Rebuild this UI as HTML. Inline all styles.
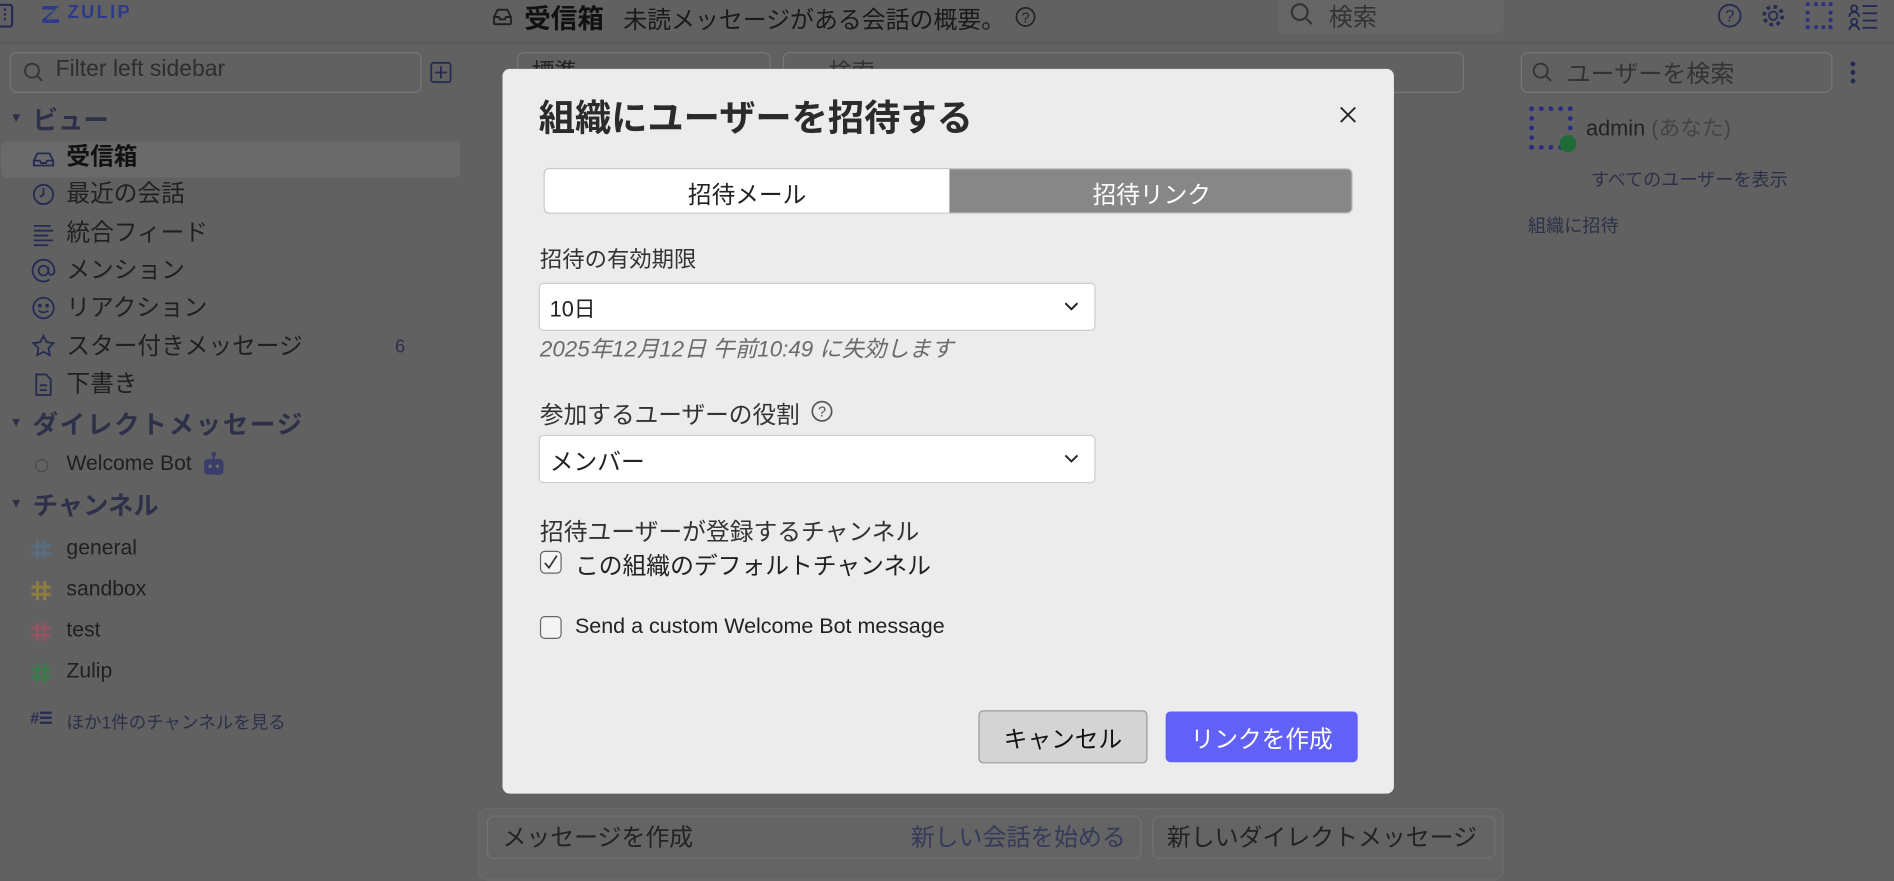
<!DOCTYPE html>
<html><head><meta charset="utf-8"><style>
*{box-sizing:border-box;margin:0;padding:0}
html,body{width:1894px;height:867px;overflow:hidden;background:#616161}
#w{position:absolute;left:0;top:0;width:1568px;height:718px;transform:scale(1.20791);transform-origin:0 0;font-family:"Liberation Sans","Noto Sans CJK JP",sans-serif;color:#1d1d1f}
.a{position:absolute;white-space:nowrap}
.box{position:absolute;border:1px solid #777;border-radius:6px}
.it{position:absolute;left:55px;font-size:19.6px;line-height:22px;color:#202020}
.hd{position:absolute;left:27px;font-size:21px;font-weight:bold;color:#2d3048}
.tri{position:absolute;left:8px;font-size:11px;color:#2d3048}
.ch{position:absolute;left:55px;font-size:17.5px;color:#202020}
.hash{position:absolute;left:25px}
</style></head><body><div id="w">
<!-- header -->
<svg class="a" style="left:0;top:3px" width="12" height="20" viewBox="0 0 12 20"><rect x="-4" y="1" width="14" height="18" rx="2" fill="none" stroke="#262a52" stroke-width="1.8"/><line x1="4" y1="4" x2="4" y2="16" stroke="#262a52" stroke-width="1.6" stroke-dasharray="2 2"/></svg>
<svg class="a" style="left:33px;top:3px" width="18" height="18" viewBox="0 0 18 18"><path d="M2 2h14l-11 11h11v3H2v-3l10-8H2z" fill="#2d3a8c"/></svg>
<div class="a" style="left:56px;top:2px;font-size:15px;font-weight:bold;letter-spacing:2px;color:#2d3a8c">ZULIP</div>
<div style="position:absolute;left:0;top:35px;width:1568px;height:1px;background:#545454"></div>
<svg class="a" style="left:407px;top:6px" width="18" height="16" viewBox="0 0 18 16"><path d="M2 8l3-6h8l3 6v5a1 1 0 0 1-1 1H3a1 1 0 0 1-1-1z M2 8h4l1 2h4l1-2h4" fill="none" stroke="#1e1e1e" stroke-width="1.5"/></svg>
<div class="a" style="left:434px;top:-2px;font-size:22px;font-weight:bold;color:#111">受信箱</div>
<div class="a" style="left:516px;top:0px;font-size:19.8px;color:#1a1a1a">未読メッセージがある会話の概要。</div>
<svg class="a" style="left:840px;top:5px" width="18" height="18" viewBox="0 0 18 18"><circle cx="9" cy="9" r="7.5" fill="none" stroke="#222" stroke-width="1.4"/><text x="9" y="13.5" font-size="12" text-anchor="middle" fill="#222" font-family="Liberation Sans">?</text></svg>
<div style="position:absolute;left:1058px;top:-6px;width:187px;height:34px;background:#666;border-radius:6px"></div>
<svg class="a" style="left:1068px;top:2px" width="20" height="20" viewBox="0 0 20 20"><circle cx="8" cy="8" r="6.5" fill="none" stroke="#333" stroke-width="1.8"/><line x1="13" y1="13" x2="18" y2="18" stroke="#333" stroke-width="1.8"/></svg>
<div class="a" style="left:1100px;top:-2px;font-size:20px;color:#333">検索</div>
<svg class="a" style="left:1421px;top:2px" width="22" height="22" viewBox="0 0 22 22"><circle cx="11" cy="11" r="9" fill="none" stroke="#262a52" stroke-width="1.5"/><text x="11" y="16" font-size="14" text-anchor="middle" fill="#262a52" font-family="Liberation Sans">?</text></svg>
<svg class="a" style="left:1457px;top:2px" width="22" height="22" viewBox="0 0 22 22"><circle cx="11" cy="11" r="3.5" fill="none" stroke="#262a52" stroke-width="1.5"/><circle cx="11" cy="11" r="7.5" fill="none" stroke="#262a52" stroke-width="3" stroke-dasharray="3 2.9"/></svg>
<div style="position:absolute;left:1495px;top:2px;width:22px;height:22px;border:3px dotted #2a2d80"></div>
<svg class="a" style="left:1530px;top:2px" width="25" height="24" viewBox="0 0 25 24"><g fill="none" stroke="#262a52" stroke-width="1.6"><circle cx="5" cy="5" r="2.5"/><path d="M1 12a4 4 0 0 1 8 0"/><circle cx="5" cy="16" r="2.5"/><path d="M1 23a4 4 0 0 1 8 0"/><path d="M12 3h12M12 9h12M12 15h12M12 21h12"/></g></svg>
<!-- left sidebar -->
<div class="box" style="left:8px;top:43px;width:341px;height:34px"></div>
<svg class="a" style="left:19px;top:51px" width="18" height="18" viewBox="0 0 18 18"><circle cx="7.5" cy="7.5" r="5.8" fill="none" stroke="#333" stroke-width="1.5"/><line x1="11.5" y1="11.5" x2="16" y2="16" stroke="#333" stroke-width="1.5"/></svg>
<div class="a" style="left:46px;top:47px;font-size:19px;color:#2e2e2e">Filter left sidebar</div>
<svg class="a" style="left:356px;top:51px" width="18" height="18" viewBox="0 0 18 18"><rect x="1" y="1" width="16" height="16" rx="2" fill="none" stroke="#262a52" stroke-width="1.5"/><path d="M9 4v10M4 9h10" stroke="#262a52" stroke-width="1.5"/></svg>
<div class="tri" style="top:92px">▼</div><div class="hd" style="top:84px">ビュー</div>
<div style="position:absolute;left:1px;top:117px;width:380px;height:30px;background:#6a6a6a;border-radius:5px"></div>
<div class="it" style="top:119px;font-weight:bold;color:#111">受信箱</div>
<div class="it" style="top:150px">最近の会話</div>
<div class="it" style="top:182px">統合フィード</div>
<div class="it" style="top:213px">メンション</div>
<div class="it" style="top:244px">リアクション</div>
<div class="it" style="top:276px">スター付きメッセージ</div>
<div class="a" style="left:327px;top:279px;font-size:15px;color:#2d3048">6</div>
<div class="it" style="top:307px">下書き</div>
<svg class="a" style="left:26px;top:120px" width="22" height="220" viewBox="0 0 22 220"><g fill="none" stroke="#262a52" stroke-width="1.5">
<path d="M2 13l3-6h10l3 6v4H2z M2 13h5l1 2h4l1-2h5"/>
<circle cx="10" cy="41" r="8"/><path d="M10 36v5l-3 2"/>
<path d="M2 67h14M2 71h16M2 75h12M2 79h16M2 83h12"/>
<circle cx="10" cy="104" r="4"/><path d="M14 101v4a2.5 2.5 0 0 0 5 0v-1a9 9 0 1 0-4 7.5"/>
<circle cx="10" cy="135" r="8.5"/><circle cx="7" cy="133" r=".8" fill="#262a52"/><circle cx="13" cy="133" r=".8" fill="#262a52"/><path d="M6 137a5 4 0 0 0 8 0"/>
<path d="M10 158l2.6 5.3 5.8.8-4.2 4.1 1 5.8-5.2-2.7-5.2 2.7 1-5.8-4.2-4.1 5.8-.8z"/>
<path d="M4 190h8l4 4v13H4z M7 199h6M7 203h6"/></g></svg>
<div class="tri" style="top:344px">▼</div><div class="hd" style="top:336px;letter-spacing:1.5px">ダイレクトメッセージ</div>
<div class="a" style="left:29px;top:380px;width:11px;height:11px;border:1.5px solid #4a4a4a;border-radius:50%"></div>
<div class="ch" style="top:373px">Welcome Bot</div>
<svg class="a" style="left:168px;top:374px" width="18" height="20" viewBox="0 0 18 20"><rect x="1" y="6" width="16" height="13" rx="3" fill="#3b3c6b"/><rect x="8" y="1" width="2" height="5" fill="#3b3c6b"/><circle cx="9" cy="2" r="2" fill="#3b3c6b"/><circle cx="6" cy="12" r="1.5" fill="#6a6a6a"/><circle cx="12" cy="12" r="1.5" fill="#6a6a6a"/></svg>
<div class="tri" style="top:411px">▼</div><div class="hd" style="top:403px">チャンネル</div>
<svg class="hash" style="top:446px" width="18" height="18" viewBox="0 0 18 18"><path d="M6 1v16M12 1v16M1 6h16M1 12h16" stroke="#5a6d80" stroke-width="2.6"/></svg><div class="ch" style="top:443px">general</div>
<svg class="hash" style="top:480px" width="18" height="18" viewBox="0 0 18 18"><path d="M6 1v16M12 1v16M1 6h16M1 12h16" stroke="#8c7d40" stroke-width="2.6"/></svg><div class="ch" style="top:477px">sandbox</div>
<svg class="hash" style="top:514px" width="18" height="18" viewBox="0 0 18 18"><path d="M6 1v16M12 1v16M1 6h16M1 12h16" stroke="#8e5563" stroke-width="2.6"/></svg><div class="ch" style="top:511px">test</div>
<svg class="hash" style="top:548px" width="18" height="18" viewBox="0 0 18 18"><path d="M6 1v16M12 1v16M1 6h16M1 12h16" stroke="#3d7a4c" stroke-width="2.6"/></svg><div class="ch" style="top:545px">Zulip</div>
<div class="a" style="left:25px;top:587px;font-size:13px;font-weight:bold;color:#262a52">#☰</div>
<div class="a" style="left:55px;top:587px;font-size:14.5px;color:#2d3048">ほか1件のチャンネルを見る</div>
<!-- middle behind -->
<div class="box" style="left:428px;top:43px;width:210px;height:34px"></div>
<div class="a" style="left:440px;top:45px;font-size:19px;color:#222">標準</div>
<div class="box" style="left:648px;top:43px;width:564px;height:34px"></div>
<div class="a" style="left:686px;top:45px;font-size:19px;color:#333">検索</div>
<div style="position:absolute;left:396px;top:669px;width:849px;height:60px;border:1px solid #6c6c6c;border-radius:8px;background:#646464"></div>
<div class="box" style="left:403px;top:675px;width:542px;height:36px;border-color:#727272;background:#646464"></div>
<div class="a" style="left:416px;top:677px;font-size:19.8px;color:#222">メッセージを作成</div>
<div class="a" style="left:754px;top:677px;font-size:19.8px;color:#363a5a">新しい会話を始める</div>
<div class="box" style="left:954px;top:675px;width:284px;height:36px;border-color:#727272;background:#646464"></div>
<div class="a" style="left:966px;top:677px;font-size:19.8px;color:#222">新しいダイレクトメッセージ</div>
<!-- right sidebar -->
<div class="box" style="left:1259px;top:43px;width:258px;height:34px"></div>
<svg class="a" style="left:1268px;top:51px" width="18" height="18" viewBox="0 0 18 18"><circle cx="7.5" cy="7.5" r="5.8" fill="none" stroke="#333" stroke-width="1.5"/><line x1="11.5" y1="11.5" x2="16" y2="16" stroke="#333" stroke-width="1.5"/></svg>
<div class="a" style="left:1297px;top:45px;font-size:19.9px;color:#333">ユーザーを検索</div>
<svg class="a" style="left:1530px;top:50px" width="8" height="20" viewBox="0 0 8 20"><circle cx="4" cy="3" r="2" fill="#262a52"/><circle cx="4" cy="10" r="2" fill="#262a52"/><circle cx="4" cy="17" r="2" fill="#262a52"/></svg>
<div style="position:absolute;left:1266px;top:88px;width:36px;height:36px;border:4px dotted #2a2d80"></div>
<div style="position:absolute;left:1291px;top:112px;width:14px;height:14px;border-radius:50%;background:#1f6b35"></div>
<div class="a" style="left:1313px;top:92px;font-size:18px;color:#222">admin <span style="color:#444">(あなた)</span></div>
<div class="a" style="left:1317px;top:138px;font-size:15px;color:#2d3048">すべてのユーザーを表示</div>
<div class="a" style="left:1265px;top:176px;font-size:15px;color:#2d3048">組織に招待</div>
<!-- modal -->
<div style="position:absolute;left:416px;top:57px;width:738px;height:600px;background:#ececec;border-radius:6px"></div>
<div class="a" style="left:446px;top:73px;font-size:30px;font-weight:bold;color:#2b2b2b">組織にユーザーを招待する</div>
<svg class="a" style="left:1108px;top:87px" width="16" height="16" viewBox="0 0 16 16"><path d="M2 2l12 12M14 2L2 14" stroke="#222" stroke-width="1.6"/></svg>
<div style="position:absolute;left:450px;top:139px;width:670px;height:38px;border:1px solid #c8c8c8;border-radius:5px;overflow:hidden;background:#fff">
<div style="position:absolute;left:335px;top:0;width:335px;height:38px;background:#878787"></div>
<div class="a" style="left:0;width:335px;top:5px;text-align:center;font-size:19.6px;color:#222">招待メール</div>
<div class="a" style="left:335px;width:335px;top:5px;text-align:center;font-size:19.6px;color:#fff">招待リンク</div></div>
<div class="a" style="left:447px;top:201px;font-size:18.5px;color:#333">招待の有効期限</div>
<div style="position:absolute;left:446px;top:234px;width:461px;height:40px;background:#fff;border:1px solid #ccc;border-radius:4px"></div>
<div class="a" style="left:455px;top:242px;font-size:18px;color:#222">10日</div>
<svg class="a" style="left:881px;top:249px" width="12" height="10" viewBox="0 0 12 10"><path d="M1 2l5 5 5-5" fill="none" stroke="#222" stroke-width="1.6"/></svg>
<div class="a" style="left:447px;top:275px;font-size:18.5px;font-style:italic;color:#6a6a6a">2025年12月12日 午前10:49 に失効します</div>
<div class="a" style="left:447px;top:327px;font-size:19.6px;color:#333">参加するユーザーの役割</div>
<svg class="a" style="left:671px;top:331px" width="19" height="19" viewBox="0 0 19 19"><circle cx="9.5" cy="9.5" r="8" fill="none" stroke="#555" stroke-width="1.4"/><text x="9.5" y="14" font-size="12" text-anchor="middle" fill="#555" font-family="Liberation Sans">?</text></svg>
<div style="position:absolute;left:446px;top:360px;width:461px;height:40px;background:#fff;border:1px solid #ccc;border-radius:4px"></div>
<div class="a" style="left:455px;top:366px;font-size:19.7px;color:#222">メンバー</div>
<svg class="a" style="left:881px;top:375px" width="12" height="10" viewBox="0 0 12 10"><path d="M1 2l5 5 5-5" fill="none" stroke="#222" stroke-width="1.6"/></svg>
<div class="a" style="left:447px;top:424px;font-size:19.7px;color:#333">招待ユーザーが登録するチャンネル</div>
<div style="position:absolute;left:447px;top:456px;width:18px;height:19px;border:1px solid #666;border-radius:4px;background:#f4f4f4"></div>
<svg class="a" style="left:449px;top:458px" width="14" height="15" viewBox="0 0 14 15"><path d="M2 8l3.5 4L12 2" fill="none" stroke="#333" stroke-width="1.4"/></svg>
<div class="a" style="left:476px;top:452px;font-size:19.7px;color:#222">この組織のデフォルトチャンネル</div>
<div style="position:absolute;left:447px;top:510px;width:18px;height:19px;border:1px solid #666;border-radius:4px;background:#f4f4f4"></div>
<div class="a" style="left:476px;top:508px;font-size:17.8px;color:#222">Send a custom Welcome Bot message</div>
<div style="position:absolute;left:810px;top:588px;width:140px;height:44px;background:#d4d4d4;border:1px solid #9a9a9a;border-radius:4px"></div>
<div class="a" style="left:810px;top:596px;width:140px;text-align:center;font-size:19.6px;color:#111">キャンセル</div>
<div style="position:absolute;left:965px;top:589px;width:159px;height:42px;background:#6161f8;border-radius:4px"></div>
<div class="a" style="left:965px;top:596px;width:159px;text-align:center;font-size:19.6px;color:#fff">リンクを作成</div>
</div></body></html>
